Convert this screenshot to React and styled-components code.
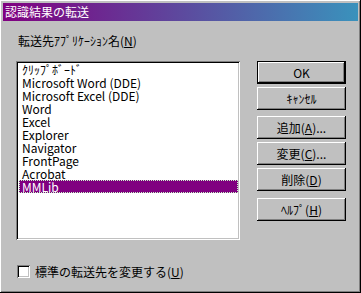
import React, { useState } from "react";
import styled, { createGlobalStyle, css } from "styled-components";

const GlobalStyle = createGlobalStyle`
  html, body {
    margin: 0;
    padding: 0;
    background: #c0c0c0;
  }
  body {
    font-family: "Noto Sans CJK JP", "Liberation Sans", sans-serif;
    font-size: 12px;
  }
`;

const raised = css`
  box-shadow: inset -1px -1px #000, inset 1px 1px #fff, inset -2px -2px #808080,
    inset 2px 2px #c0c0c0;
`;

const sunken = css`
  box-shadow: inset 1px 1px #808080, inset -1px -1px #fff, inset 2px 2px #000,
    inset -2px -2px #c0c0c0;
`;

const Window = styled.div`
  box-sizing: border-box;
  width: 361px;
  height: 293px;
  padding: 3px;
  background: #c0c0c0;
  box-shadow: inset -1px -1px #000, inset 1px 1px #fff, inset -2px -2px #808080,
    inset 2px 2px #c0c0c0;
  display: flex;
  flex-direction: column;
`;

const TitleBar = styled.div`
  height: 18px;
  display: flex;
  align-items: center;
  padding-left: 2px;
  background: linear-gradient(to right, #800080, #3a92bc);
  color: #fff;
  line-height: 18px;
  white-space: nowrap;
`;

const Body = styled.div`
  flex: 1;
  display: flex;
  flex-direction: column;
  padding: 0 12px 0 13px;
`;

const Label = styled.div`
  margin-top: 13px;
  height: 13px;
  line-height: 13px;
  padding-left: 2px;
  color: #000;
  white-space: nowrap;
`;

const Mnemonic = styled.u`
  text-underline-offset: 1px;
`;

const Main = styled.div`
  display: flex;
  margin-top: 14px;
  gap: 17px;
`;

const ListBox = styled.ul`
  box-sizing: border-box;
  list-style: none;
  margin: 0;
  width: 224px;
  height: 179px;
  padding: 2px 2px;
  background: #fff;
  ${sunken};
`;

const Item = styled.li`
  box-sizing: border-box;
  height: 13px;
  line-height: 13px;
  padding-left: 3px;
  margin-left: 1px;
  white-space: nowrap;
  color: ${(p) => (p.$selected ? "#fff" : "#000")};
  background: ${(p) => (p.$selected ? "#800080" : "transparent")};
  outline: ${(p) => (p.$selected ? "1px dotted #c8ffc8" : "none")};
  outline-offset: -1px;
`;

const Buttons = styled.div`
  display: flex;
  flex-direction: column;
  width: 89px;
`;

const Button = styled.button`
  box-sizing: border-box;
  width: 89px;
  height: 23px;
  margin: 0;
  margin-top: ${(p) => p.$gap || 0}px;
  padding: 0;
  border: none;
  background: #c0c0c0;
  font: inherit;
  color: #000;
  line-height: 21px;
  ${raised};
  ${(p) =>
    p.$default &&
    css`
      box-shadow: inset 0 0 0 1px #000, inset -2px -2px #000, inset 2px 2px #fff,
        inset -3px -3px #808080;
    `}
`;

const CheckRow = styled.label`
  display: flex;
  align-items: center;
  gap: 5px;
  margin-top: 23px;
  padding-left: 1px;
  white-space: nowrap;
`;

const CheckBox = styled.span`
  width: 13px;
  height: 13px;
  background: #fff;
  ${sunken};
`;

const items = [
  "ｸﾘｯﾌﾟﾎﾞｰﾄﾞ",
  "Microsoft Word (DDE)",
  "Microsoft Excel (DDE)",
  "Word",
  "Excel",
  "Explorer",
  "Navigator",
  "FrontPage",
  "Acrobat",
  "MMLib",
];

const App = () => {
  const [selected, setSelected] = useState(9);
  return (
    <>
      <GlobalStyle />
      <Window>
        <TitleBar>認識結果の転送</TitleBar>
        <Body>
          <Label>
            転送先ｱﾌﾟﾘｹｰｼｮﾝ名(<Mnemonic>N</Mnemonic>)
          </Label>
          <Main>
            <ListBox>
              {items.map((name, i) => (
                <Item key={name} $selected={i === selected} onClick={() => setSelected(i)}>
                  {name}
                </Item>
              ))}
            </ListBox>
            <Buttons>
              <Button $default>OK</Button>
              <Button $gap={3}>ｷｬﾝｾﾙ</Button>
              <Button $gap={6}>
                追加(<Mnemonic>A</Mnemonic>)...
              </Button>
              <Button $gap={3}>
                変更(<Mnemonic>C</Mnemonic>)...
              </Button>
              <Button $gap={3}>
                削除(<Mnemonic>D</Mnemonic>)
              </Button>
              <Button $gap={7}>
                ﾍﾙﾌﾟ(<Mnemonic>H</Mnemonic>)
              </Button>
            </Buttons>
          </Main>
          <CheckRow>
            <CheckBox />
            <span>
              標準の転送先を変更する(<Mnemonic>U</Mnemonic>)
            </span>
          </CheckRow>
        </Body>
      </Window>
    </>
  );
};

export default App;
